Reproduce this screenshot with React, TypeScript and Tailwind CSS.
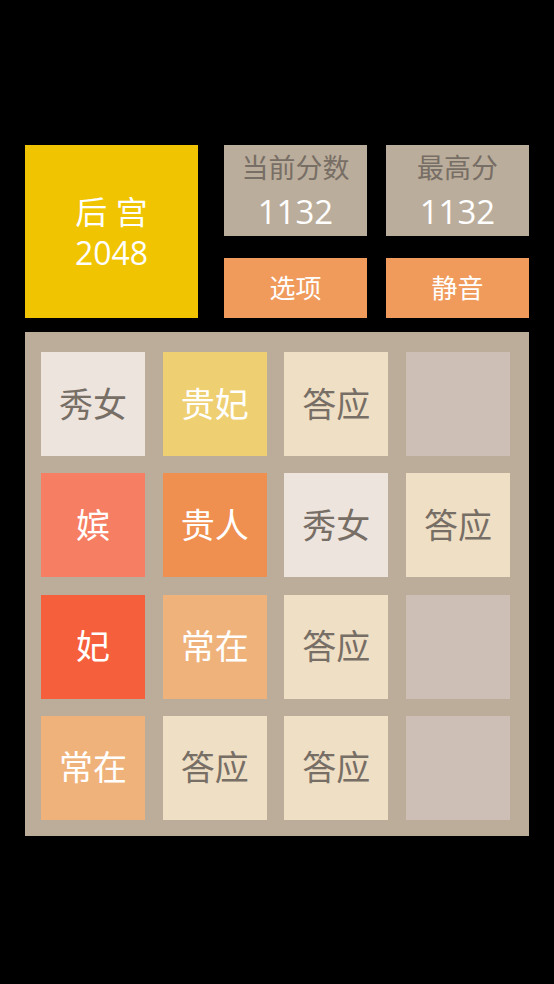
import React from "react";

type Tile = { label: string; bg: string; fg: string };

const E: Tile = { label: "", bg: "bg-[#cdbfb5]", fg: "" };
const XN: Tile = { label: "秀女", bg: "bg-[#eee4de]", fg: "text-[#776e65]" };
const DY: Tile = { label: "答应", bg: "bg-[#efdfc5]", fg: "text-[#776e65]" };
const GF: Tile = { label: "贵妃", bg: "bg-[#eecf72]", fg: "text-white" };
const PIN: Tile = { label: "嫔", bg: "bg-[#f67f63]", fg: "text-white" };
const GR: Tile = { label: "贵人", bg: "bg-[#ef9050]", fg: "text-white" };
const FEI: Tile = { label: "妃", bg: "bg-[#f65f3b]", fg: "text-white" };
const CZ: Tile = { label: "常在", bg: "bg-[#efb27b]", fg: "text-white" };

const board: Tile[] = [
  XN, GF, DY, E,
  PIN, GR, XN, DY,
  FEI, CZ, DY, E,
  CZ, DY, DY, E,
];

function App() {
  return (
    <div
      className="w-[554px] h-[984px] bg-black pt-[145px] px-[25px]"
      style={{ fontFamily: '"Open Sans", "Noto Sans CJK SC", sans-serif' }}
    >
      {/* header */}
      <div className="flex gap-[26px]">
        <div className="w-[173px] h-[173px] bg-[#f0c400] flex flex-col items-center justify-center text-white text-[32px] leading-[41px]">
          <span className="block h-[41px]">后 宫</span>
          <span className="block h-[41px]">2048</span>
        </div>
        <div className="grid grid-cols-[143px_143px] grid-rows-[91px_60px] gap-x-[19px] gap-y-[22px]">
          <div className="bg-[#bbad9b] flex flex-col items-center pt-[5px]">
            <span className="text-[27px] leading-[36px] text-[#776e65]">当前分数</span>
            <span className="mt-[3px] text-[33px] leading-[46px] text-white">1132</span>
          </div>
          <div className="bg-[#bbad9b] flex flex-col items-center pt-[5px]">
            <span className="text-[27px] leading-[36px] text-[#776e65]">最高分</span>
            <span className="mt-[3px] text-[33px] leading-[46px] text-white">1132</span>
          </div>
          <div className="bg-[#f09b5c] flex items-center justify-center text-white text-[26px]">选项</div>
          <div className="bg-[#f09b5c] flex items-center justify-center text-white text-[26px]">静音</div>
        </div>
      </div>

      {/* board */}
      <div className="mt-[14px] w-[504px] h-[504px] bg-[#bbad9a] pl-[16px] pt-[20px] grid grid-cols-[repeat(4,104px)] grid-rows-[repeat(4,104px)] gap-x-[17.67px] gap-y-[17.33px]">
        {board.map((t, i) => (
          <div
            key={i}
            className={`${t.bg} ${t.fg} flex items-center justify-center text-[34px]`}
          >
            {t.label}
          </div>
        ))}
      </div>
    </div>
  );
}

export default App;
